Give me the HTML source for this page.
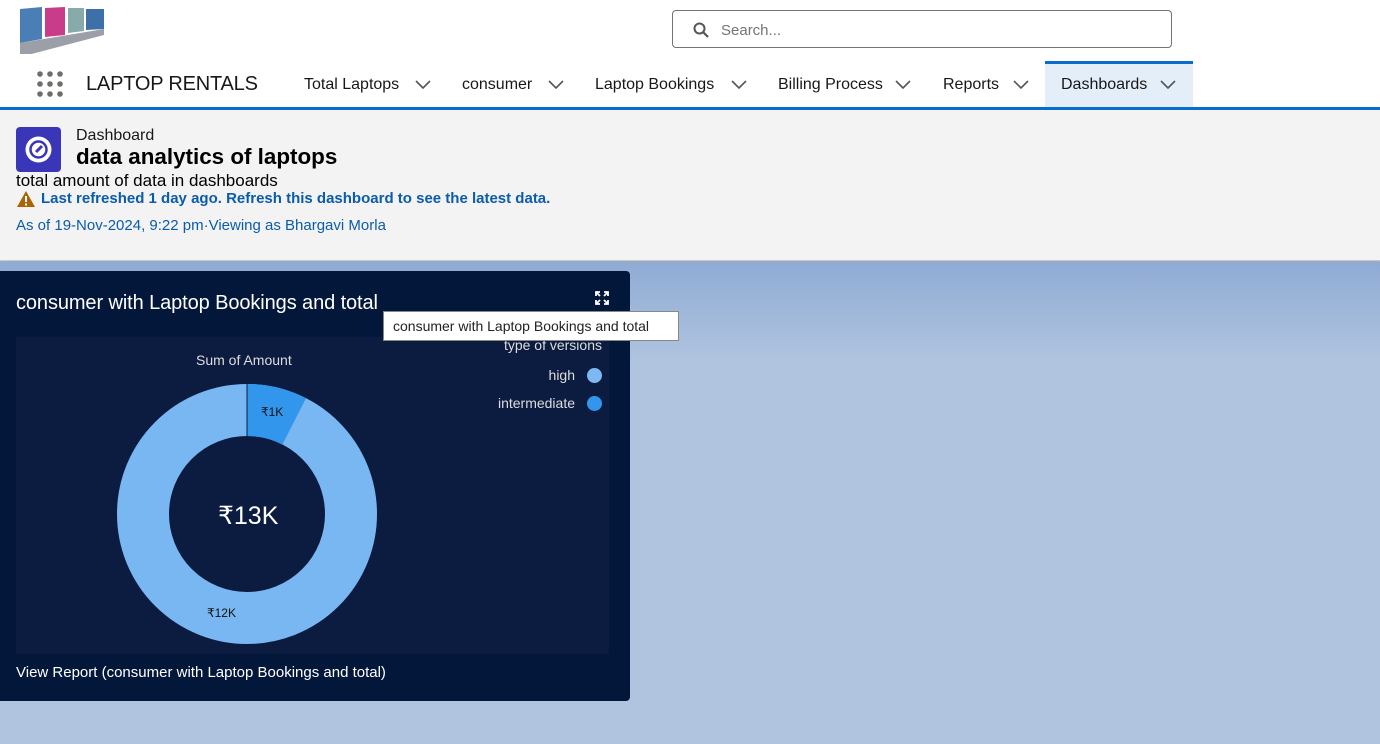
<!DOCTYPE html>
<html><head><style>
*{margin:0;padding:0;box-sizing:border-box}
body{width:1380px;height:744px;overflow:hidden;font-family:"Liberation Sans",sans-serif;background:#b0c4df;position:relative}
.abs{position:absolute}
.nav{font-size:16px;color:#181818;top:76px}
.chev{position:absolute;top:80px;width:16px;height:10px}
.lg{position:absolute;right:805px;font-size:14px;color:#ddd;text-align:right;white-space:nowrap}
</style></head><body>
<div class="abs" style="left:0;top:0;width:1380px;height:107px;background:#fff"></div>
<svg class="abs" style="left:20px;top:5px" width="84" height="49">
<rect x="0" y="0" width="84" height="49" fill="#fff"/>
<polygon points="0,4 22,2 22,34 0,38" fill="#4a7fb5"/>
<polygon points="25,3 45,2 45,30 25,32" fill="#c83c8a"/>
<polygon points="48,3 64,3 64,26 48,28" fill="#8aa"/>
<polygon points="66,4 84,4 84,24 66,25" fill="#3d6fa8"/>
<polygon points="0,38 84,24 84,30 0,52" fill="#9a9fa8"/>
</svg>
<div class="abs" style="left:672px;top:10px;width:500px;height:38px;border:1px solid #747474;border-radius:4px"></div>
<svg class="abs" style="left:693px;top:22px" width="16" height="16"><circle cx="6.5" cy="6.5" r="5" stroke="#555" stroke-width="2" fill="none"/><line x1="10" y1="10" x2="15" y2="15" stroke="#555" stroke-width="2.2"/></svg>
<div class="abs" style="left:721px;top:22px;font-size:15px;color:#747474">Search...</div>
<svg class="abs" style="left:37px;top:71px" width="27" height="27" fill="#706e6b">
<circle cx="3" cy="3" r="2.8"/><circle cx="13" cy="3" r="2.8"/><circle cx="23" cy="3" r="2.8"/>
<circle cx="3" cy="13" r="2.8"/><circle cx="13" cy="13" r="2.8"/><circle cx="23" cy="13" r="2.8"/>
<circle cx="3" cy="23" r="2.8"/><circle cx="13" cy="23" r="2.8"/><circle cx="23" cy="23" r="2.8"/></svg>
<div class="abs" style="left:86px;top:73px;font-size:20px;color:#181818;letter-spacing:-0.2px">LAPTOP RENTALS</div>
<div class="abs" style="left:1045px;top:61px;width:148px;height:46px;background:#e4eef9;border-top:3px solid #0b6cd0"></div>
<div class="abs nav" style="left:304px">Total Laptops</div>
<div class="abs nav" style="left:462px">consumer</div>
<div class="abs nav" style="left:595px">Laptop Bookings</div>
<div class="abs nav" style="left:778px">Billing Process</div>
<div class="abs nav" style="left:943px">Reports</div>
<div class="abs nav" style="left:1061px">Dashboards</div>
<svg class="chev" style="left:415px"><path d="M1 1 L8 8 L15 1" stroke="#555" stroke-width="1.6" fill="none"/></svg>
<svg class="chev" style="left:548px"><path d="M1 1 L8 8 L15 1" stroke="#555" stroke-width="1.6" fill="none"/></svg>
<svg class="chev" style="left:731px"><path d="M1 1 L8 8 L15 1" stroke="#555" stroke-width="1.6" fill="none"/></svg>
<svg class="chev" style="left:895px"><path d="M1 1 L8 8 L15 1" stroke="#555" stroke-width="1.6" fill="none"/></svg>
<svg class="chev" style="left:1013px"><path d="M1 1 L8 8 L15 1" stroke="#555" stroke-width="1.6" fill="none"/></svg>
<svg class="chev" style="left:1160px"><path d="M1 1 L8 8 L15 1" stroke="#555" stroke-width="1.6" fill="none"/></svg>
<div class="abs" style="left:0;top:107px;width:1380px;height:3px;background:#0b6cd0"></div>
<div class="abs" style="left:0;top:110px;width:1380px;height:151px;background:#f3f3f3;border-bottom:1px solid #c9c9c9;box-shadow:0 2px 3px rgba(0,0,0,.15)"></div>
<div class="abs" style="left:16px;top:127px;width:45px;height:45px;background:#3a36b8;border-radius:4px"></div>
<svg class="abs" style="left:22px;top:133px" width="33" height="33"><circle cx="16.5" cy="16.5" r="13" fill="#fff"/><circle cx="16.5" cy="16.5" r="8" fill="none" stroke="#3a36b8" stroke-width="2.5"/><line x1="14" y1="19" x2="20" y2="13" stroke="#3a36b8" stroke-width="3"/></svg>
<div class="abs" style="left:76px;top:127px;font-size:16px;color:#181818">Dashboard</div>
<div class="abs" style="left:76px;top:144px;font-size:22.4px;font-weight:bold;color:#000">data analytics of laptops</div>
<div class="abs" style="left:16px;top:171px;font-size:17px;color:#000">total amount of data in dashboards</div>
<svg class="abs" style="left:16px;top:190px" width="20" height="18"><polygon points="10,1 19,17 1,17" fill="#a96404"/><rect x="9" y="6" width="2" height="6" fill="#fff"/><rect x="9" y="13.5" width="2" height="2" fill="#fff"/></svg>
<div class="abs" style="left:41px;top:190px;font-size:15px;font-weight:bold;color:#0b5cab">Last refreshed 1 day ago. Refresh this dashboard to see the latest data.</div>
<div class="abs" style="left:16px;top:217px;font-size:15px;color:#0b5cab">As of 19-Nov-2024, 9:22 pm·Viewing as Bhargavi Morla</div>
<div class="abs" style="left:0;top:262px;width:1380px;height:100px;background:linear-gradient(#8fabd4,#b0c4df)"></div>
<div class="abs" style="left:0;top:271px;width:630px;height:430px;background:#03173a;border-radius:0 4px 4px 0"></div>
<div class="abs" style="left:16px;top:292px;font-size:20px;color:#fff;letter-spacing:-0.1px">consumer with Laptop Bookings and total</div>
<svg class="abs" style="left:595px;top:291px" width="14" height="14" stroke="#fff" stroke-width="1.8" fill="none"><path d="M1 5V1h4M1 1l4 4M13 5V1H9M13 1L9 5M1 9v4h4M1 13l4-4M13 9v4H9M13 13L9 9"/></svg>
<div class="abs" style="left:16px;top:337px;width:593px;height:317px;background:#0b1c40"></div>
<div class="abs" style="left:196px;top:352px;font-size:14px;color:#ddd">Sum of Amount</div>
<div class="lg" style="right:778px;top:337px">type of versions</div>
<div class="lg" style="top:367px">high</div>
<div class="abs" style="left:587px;top:368px;width:15px;height:15px;border-radius:50%;background:#7db8f2"></div>
<div class="lg" style="top:395px">intermediate</div>
<div class="abs" style="left:587px;top:396px;width:15px;height:15px;border-radius:50%;background:#3296ed"></div>
<svg class="abs" style="left:0;top:0" width="630" height="700">
<circle cx="247" cy="514" r="104" fill="none" stroke="#78b7f2" stroke-width="52"/>
<path d="M247 384 A130 130 0 0 1 306 398.2 L282.4 444.5 A78 78 0 0 0 247 436 Z" fill="#3296ed"/>
<line x1="247" y1="384" x2="247" y2="436" stroke="#0b1c40" stroke-width="1"/>
</svg>
<div class="abs" style="left:261px;top:405px;font-size:12px;color:#111">₹1K</div>
<div class="abs" style="left:207px;top:606px;font-size:12px;color:#111">₹12K</div>
<div class="abs" style="left:218px;top:501px;font-size:25px;color:#fff">₹13K</div>
<div class="abs" style="left:16px;top:664px;font-size:15px;color:#fff">View Report (consumer with Laptop Bookings and total)</div>
<div class="abs" style="left:383px;top:311px;width:296px;height:30px;background:#fff;border:1px solid #888;font-size:14px;color:#222;padding:6px 0 0 9px">consumer with Laptop Bookings and total</div>
</body></html>
